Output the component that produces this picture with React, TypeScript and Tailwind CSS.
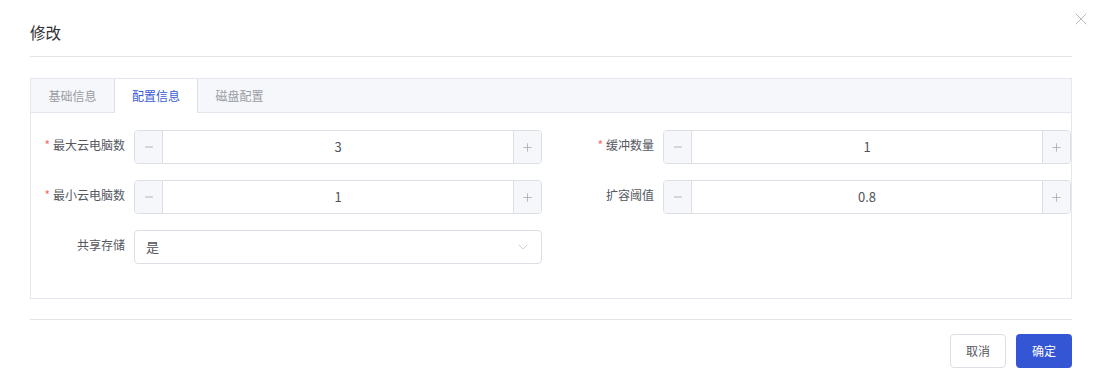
import { ChevronDown, Minus, Plus, X } from "lucide-react";

const font = { fontFamily: '"Noto Sans CJK SC", "Noto Sans", sans-serif' };

const NumberInput = ({ value }: { value: string }) => (
  <div className="flex h-[34px] w-[408px] overflow-hidden rounded-[4px] border border-[#dcdfe6]">
    <div className="flex w-[28px] items-center justify-center border-r border-[#dcdfe6] bg-[#f5f7fa] text-[#9a9ea6]">
      <Minus size={12} strokeWidth={1.5} />
    </div>
    <div className="flex flex-1 items-center justify-center text-[13px] text-[#4f5259]">{value}</div>
    <div className="flex w-[28px] items-center justify-center border-l border-[#dcdfe6] bg-[#f5f7fa] text-[#9a9ea6]">
      <Plus size={13} strokeWidth={1.3} />
    </div>
  </div>
);

const Label = ({ text, required }: { text: string; required?: boolean }) => (
  <div className="h-[34px] w-[103px] pr-[9px] text-right text-[12px] leading-[30px] text-[#55585f]">
    {required && <span className="mr-[3px] text-[#f56c6c]">*</span>}
    {text}
  </div>
);

const FormItem = ({ label, required, children }: { label: string; required?: boolean; children: React.ReactNode }) => (
  <div className="flex">
    <Label text={label} required={required} />
    {children}
  </div>
);

export default function App() {
  const tabs = ["基础信息", "配置信息", "磁盘配置"];

  return (
    <div className="relative h-[386px] w-[1098px] bg-white" style={font}>
      <button className="absolute right-[7px] top-[9px] text-[#a6a9b0]">
        <X size={20} strokeWidth={1} />
      </button>

      {/* header */}
      <div className="ml-[30px] mr-[26px] h-[57px] border-b border-[#e2e4e9] pt-[23px]">
        <div className="text-[15.5px] leading-[18px] text-[#303133]">修改</div>
      </div>

      {/* tabs card */}
      <div className="ml-[30px] mr-[26px] mt-[21px] border border-[#e4e7ed]">
        <div className="flex h-[34px] border-b border-[#e4e7ed] bg-[#f5f7fa]">
          {tabs.map((t, i) => (
            <div
              key={t}
              className={
                i === 1
                  ? "-mb-px flex w-[84px] items-center justify-center border-x border-[#dcdfe6] bg-white text-[12px] text-[#3a5bd9]"
                  : "flex w-[83px] items-center justify-center text-[12px] text-[#9a9ca3]"
              }
            >
              {t}
            </div>
          ))}
        </div>

        <div className="grid grid-cols-[511px_511px] gap-x-[18px] gap-y-[16px] pb-[34px] pt-[17px]">
          <FormItem label="最大云电脑数" required>
            <NumberInput value="3" />
          </FormItem>
          <FormItem label="缓冲数量" required>
            <NumberInput value="1" />
          </FormItem>
          <FormItem label="最小云电脑数" required>
            <NumberInput value="1" />
          </FormItem>
          <FormItem label="扩容阈值">
            <NumberInput value="0.8" />
          </FormItem>
          <FormItem label="共享存储">
            <div className="flex h-[34px] w-[408px] items-center justify-between rounded-[4px] border border-[#dcdfe6] pl-[11px] pr-[10px] text-[13px] text-[#4f5259]">
              <span>是</span>
              <ChevronDown size={16} strokeWidth={1} className="text-[#b4b8bf]" />
            </div>
          </FormItem>
        </div>
      </div>

      {/* footer */}
      <div className="ml-[30px] mr-[26px] mt-[20px] border-t border-[#e2e4e9] pt-[14px]">
        <div className="flex justify-end gap-[10px]">
          <button className="h-[34px] w-[56px] rounded-[4px] border border-[#dcdfe6] bg-white text-[12px] text-[#55585f]">
            取消
          </button>
          <button className="h-[34px] w-[56px] rounded-[4px] bg-[#3455d4] text-[12px] text-white">确定</button>
        </div>
      </div>
    </div>
  );
}
